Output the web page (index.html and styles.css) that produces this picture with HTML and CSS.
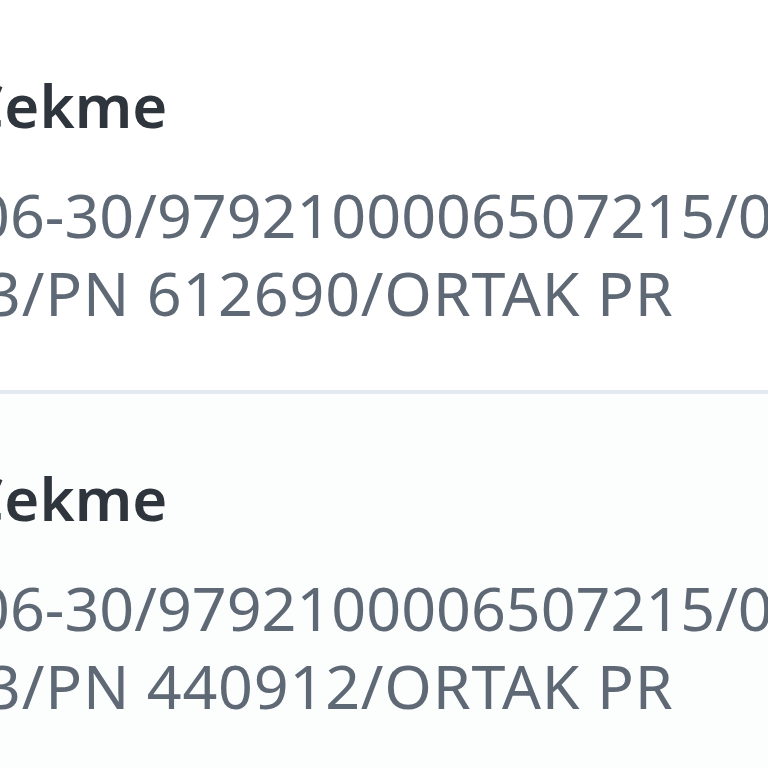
FILE: index.html
```html
<!DOCTYPE html>
<html lang="tr">
<head>
  <meta charset="UTF-8">
  <meta name="viewport" content="width=device-width, initial-scale=1.0">
  <title>Hesap Hareketleri</title>
  <link rel="stylesheet" href="styles.css">
</head>
<body>

  <ul class="tx-list">
    <li class="tx-item">
      <div class="tx-title">Çekme</div>
      <div class="tx-desc">
        <span class="tx-line tx-line-1">06-30/9792100006507215/0010</span>
        <span class="tx-line tx-line-2">3/PN 612690/ORTAK PR</span>
      </div>
    </li>
    <li class="tx-item tx-item-alt">
      <div class="tx-title">Çekme</div>
      <div class="tx-desc">
        <span class="tx-line tx-line-1">06-30/9792100006507215/0010</span>
        <span class="tx-line tx-line-2">3/PN 440912/ORTAK PR</span>
      </div>
    </li>
  </ul>

</body>
</html>
```

FILE: styles.css
```css
html, body { margin: 0; padding: 0; background: #ffffff; }
body { font-family: "Noto Sans", "Open Sans", sans-serif; overflow: hidden; width: 768px; height: 768px; }
.tx-list { list-style: none; margin: 0; padding: 1px 0 0 0; }
.tx-item { padding: 65px 0 58px 0; border-bottom: 4px solid #e3e9f1; white-space: nowrap; overflow: hidden; }
.tx-item-alt { background: #fcfdfd; }
.tx-title { font-size: 60px; line-height: 78px; font-weight: 600; color: #2f353c; margin-left: -34px; margin-bottom: 32px; }
.tx-desc { font-size: 61px; line-height: 78px; color: #5f6976; }
.tx-line { display: block; }
.tx-line-1 { margin-left: -25px; }
.tx-line-2 { margin-left: -14px; letter-spacing: 0.8px; }
```
